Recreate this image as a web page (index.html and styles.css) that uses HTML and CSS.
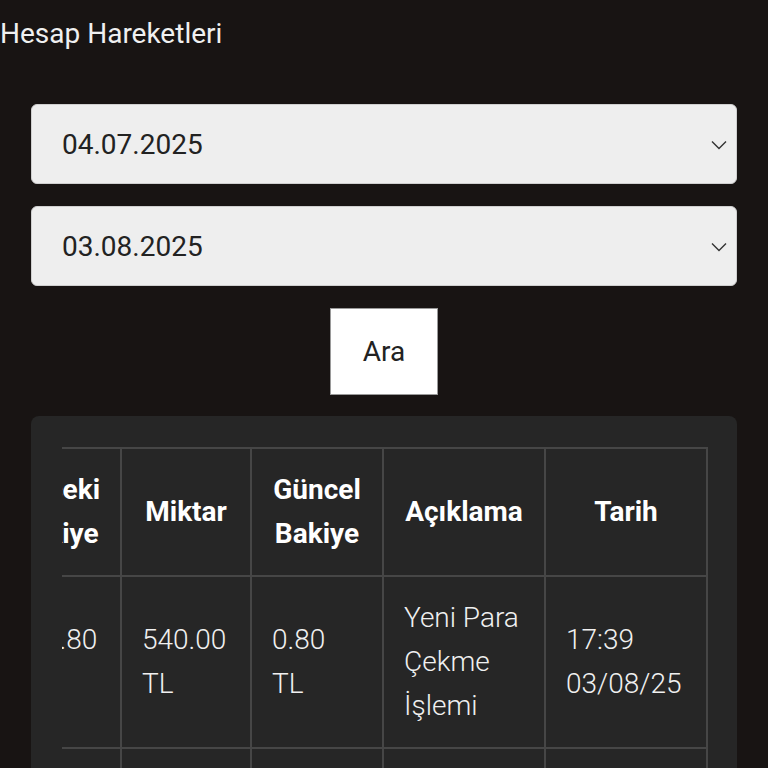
FILE: index.html
```html
<!DOCTYPE html>
<html lang="tr">

<head>
    <meta charset="UTF-8">
    <meta name="viewport" content="width=device-width, initial-scale=1.0">
    <title>Hesap Hareketleri</title>
    <link rel="stylesheet" href="styles.css">
</head>

<body>

    <h1 class="page-title">Hesap Hareketleri</h1>

    <div class="filter-form">
        <div class="date-select">
            <span>04.07.2025</span>
            <svg class="chevron" width="16" height="10" viewBox="0 0 16 10">
                <path d="M1 1.5 L8 8.5 L15 1.5" fill="none" stroke="#333" stroke-width="1.4" />
            </svg>
        </div>
        <div class="date-select">
            <span>03.08.2025</span>
            <svg class="chevron" width="16" height="10" viewBox="0 0 16 10">
                <path d="M1 1.5 L8 8.5 L15 1.5" fill="none" stroke="#333" stroke-width="1.4" />
            </svg>
        </div>
        <button class="search-btn">Ara</button>
    </div>

    <div class="card">
        <div class="table-scroll">
            <table class="moves">
                <colgroup>
                    <col class="c-prev">
                    <col class="c-amount">
                    <col class="c-balance">
                    <col class="c-desc">
                    <col class="c-date">
                </colgroup>
                <thead>
                    <tr>
                        <th>Önceki Bakiye</th>
                        <th>Miktar</th>
                        <th>Güncel Bakiye</th>
                        <th>Açıklama</th>
                        <th>Tarih</th>
                    </tr>
                </thead>
                <tbody>
                    <tr>
                        <td>540.80 TL</td>
                        <td>540.00 TL</td>
                        <td>0.80 TL</td>
                        <td>Yeni Para Çekme İşlemi</td>
                        <td>17:39 03/08/25</td>
                    </tr>
                    <tr>
                        <td>40.80 TL</td>
                        <td>500.00 TL</td>
                        <td>540.80 TL</td>
                        <td>Yeni Para Yatırma İşlemi</td>
                        <td>14:02 28/07/25</td>
                    </tr>
                </tbody>
            </table>
        </div>
    </div>

</body>

</html>
```

FILE: styles.css
```css
body {
    margin: 0;
    background: #181413;
    color: #fff;
    font-family: Roboto, "Liberation Sans", sans-serif;
    font-size: 28px;
}

.page-title {
    margin: 0;
    padding: 17px 0 0 0;
    font-size: 28px;
    font-weight: 400;
    line-height: 33px;
    color: #f0f0f0;
}

/* Filters */
.filter-form {
    display: flex;
    flex-direction: column;
    gap: 22px;
    margin-top: 54px;
    padding: 0 31px;
}

.date-select {
    display: flex;
    align-items: center;
    justify-content: space-between;
    height: 80px;
    box-sizing: border-box;
    padding: 0 9px 0 30px;
    background: #eeeeee;
    border: 1px solid #cfcfcf;
    border-radius: 6px;
    color: #222;
    line-height: 33px;
}

.chevron {
    margin-top: 2px;
}

.search-btn {
    align-self: center;
    padding: 26px 32px;
    font-family: inherit;
    font-size: 28px;
    line-height: 33px;
    color: #222;
    background: #fff;
    border: 1px solid #9a9a9a;
    border-radius: 0;
}

/* Table card */
.card {
    margin: 21px 31px 0;
    padding: 31px 29px 31px 31px;
    background: #262626;
    border-radius: 8px;
}

.table-scroll {
    display: flex;
    justify-content: flex-end;
    overflow: hidden;
}

.moves {
    flex: none;
    width: 715px;
    table-layout: fixed;
    border-collapse: collapse;
    line-height: 44px;
}

.c-prev { width: 129px; }
.c-amount { width: 130px; }
.c-balance { width: 132px; }
.c-desc { width: 162px; }
.c-date { width: 162px; }

.moves th,
.moves td {
    padding: 19px 20px;
    border: 2px solid #464646;
    vertical-align: middle;
}

.moves th {
    font-weight: 700;
    text-align: center;
    color: #fff;
}

.moves td {
    text-align: left;
    font-weight: 300;
    color: #f0f0f0;
}
```
